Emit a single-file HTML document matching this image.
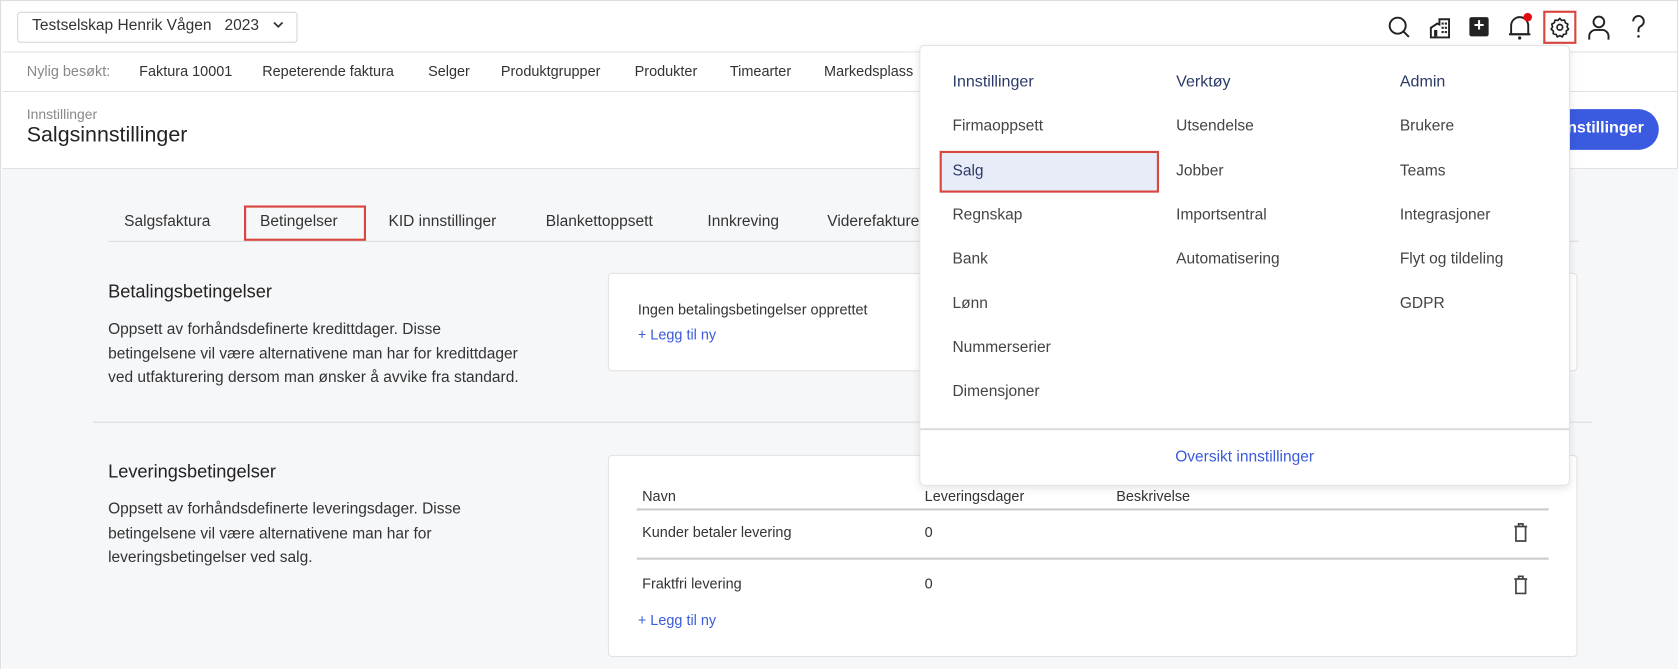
<!DOCTYPE html>
<html><head><meta charset="utf-8"><style>
*{box-sizing:border-box;margin:0;padding:0}
html,body{width:1678px;height:669px;overflow:hidden;background:#fff}
#s{position:absolute;left:0;top:0;width:1568px;height:625px;transform:scale(1.0702);transform-origin:0 0;font-family:"Liberation Sans",sans-serif;color:#333;font-size:14px}
.a{position:absolute;white-space:nowrap}
.bl{color:#3b5bdb}
.dd .i{position:absolute;font-size:14.5px;color:#444}
.dd .h{position:absolute;font-size:15px;color:#2b3a67}
</style></head><body><div id="s">
<div class="a" style="left:0;top:0;width:1568px;height:625px;border:1px solid #ddd;border-bottom:none"></div>
<div class="a" style="left:16px;top:11px;width:262px;height:29px;border:1px solid #d6d6d6;border-radius:3px"></div>
<div class="a" style="left:30px;top:16px;font-size:14.5px;color:#333">Testselskap Henrik Vågen&nbsp;&nbsp; 2023</div>
<svg class="a" style="left:254px;top:18px" width="12" height="10"><path d="M2 3l4 4 4-4" stroke="#333" stroke-width="1.6" fill="none"/></svg>
<div class="a" style="left:2px;top:48px;width:1566px;height:1px;background:#e2e2e2"></div>
<svg class="a" style="left:1296px;top:14px" width="24" height="24"><circle cx="10" cy="10" r="7.5" stroke="#222" stroke-width="1.8" fill="none"/><path d="M15.5 15.5l5 5" stroke="#222" stroke-width="1.8"/></svg>
<svg class="a" style="left:1335px;top:15px" width="22" height="22"><path d="M2 20V11l6-4 2 1V3h9v17z" stroke="#222" stroke-width="1.8" fill="none"/><path d="M5 13h3v6H5zM12 6h2v2h-2zM15 6h2v2h-2zM12 10h2v2h-2zM15 10h2v2h-2zM12 14h2v2h-2zM15 14h2v2h-2z" fill="#222"/></svg>
<div class="a" style="left:1373px;top:16px;width:18px;height:18px;background:#222;border-radius:2px"></div>
<div class="a" style="left:1373px;top:14px;width:18px;text-align:center;color:#fff;font-weight:bold;font-size:17px">+</div>
<svg class="a" style="left:1408px;top:11px" width="24" height="28"><path d="M4 21V13a8 8 0 0 1 16 0v8z" stroke="#222" stroke-width="1.8" fill="none"/><path d="M2 21h20" stroke="#222" stroke-width="1.8"/><circle cx="12" cy="24.5" r="1.5" fill="#222"/><circle cx="19.5" cy="5" r="4" fill="#e30613"/></svg>
<div class="a" style="left:1442px;top:10px;width:31px;height:31px;border:2px solid #d9453f"></div>
<svg class="a" style="left:1447px;top:15px" width="21" height="21" viewBox="0 0 24 24"><path d="M12 2.5l2 2.2 3-.4.9 2.9 2.7 1.4-.9 2.9 1.6 2.5-2.4 1.9.1 3-3 .7-1.4 2.7-2.6-1.4-2.6 1.4-1.4-2.7-3-.7.1-3-2.4-1.9 1.6-2.5-.9-2.9 2.7-1.4.9-2.9 3 .4z" stroke="#222" stroke-width="1.8" fill="none" stroke-linejoin="round"/><circle cx="12" cy="12" r="3" stroke="#222" stroke-width="1.8" fill="none"/></svg>
<svg class="a" style="left:1483px;top:13px" width="22" height="26"><circle cx="11" cy="7.5" r="5" stroke="#222" stroke-width="1.8" fill="none"/><path d="M2 24v-3a6 6 0 0 1 6-6h6a6 6 0 0 1 6 6v3" stroke="#222" stroke-width="1.8" fill="none"/></svg>
<svg class="a" style="left:1523px;top:13px" width="16" height="24"><path d="M3 7a5 5 0 1 1 7 4.5c-1.5.8-2 1.8-2 3.5v2" stroke="#222" stroke-width="1.8" fill="none"/><circle cx="8" cy="21" r="1.2" fill="#222"/></svg>
<div class="a" style="left:2px;top:85px;width:1566px;height:1px;background:#e2e2e2"></div>
<div class="a" style="top:59px;left:25px;color:#888;font-size:13.5px">Nylig besøkt:</div>
<div class="a" style="top:59px;left:130px;font-size:13.5px">Faktura 10001</div>
<div class="a" style="top:59px;left:245px;font-size:13.5px">Repeterende faktura</div>
<div class="a" style="top:59px;left:400px;font-size:13.5px">Selger</div>
<div class="a" style="top:59px;left:468px;font-size:13.5px">Produktgrupper</div>
<div class="a" style="top:59px;left:593px;font-size:13.5px">Produkter</div>
<div class="a" style="top:59px;left:682px;font-size:13.5px">Timearter</div>
<div class="a" style="top:59px;left:770px;font-size:13.5px">Markedsplass</div>
<div class="a" style="top:99px;left:25px;color:#888;font-size:13px">Innstillinger</div>
<div class="a" style="top:115px;left:25px;font-size:20px;color:#222">Salgsinnstillinger</div>
<div class="a" style="left:1350px;top:102px;width:200px;height:38px;border-radius:19px;background:#3a5be0"></div>
<div class="a" style="left:1400px;top:111px;width:136px;text-align:right;color:#fff;font-weight:bold;font-size:15px">Innstillinger</div>
<div class="a" style="left:2px;top:157px;width:1566px;height:468px;background:#f6f7f9;border-top:1px solid #e2e2e2"></div>
<div class="a" style="left:101px;top:225px;width:1374px;height:1px;background:#ddd"></div>
<div class="a" style="top:199px;left:116px;font-size:14.5px">Salgsfaktura</div>
<div class="a" style="left:228px;top:192px;width:114px;height:33px;border:2px solid #d9453f"></div>
<div class="a" style="top:199px;left:243px;font-size:14.5px">Betingelser</div>
<div class="a" style="top:199px;left:363px;font-size:14.5px">KID innstillinger</div>
<div class="a" style="top:199px;left:510px;font-size:14.5px">Blankettoppsett</div>
<div class="a" style="top:199px;left:661px;font-size:14.5px">Innkreving</div>
<div class="a" style="top:199px;left:773px;font-size:14.5px">Viderefakturering</div>
<div class="a" style="top:263px;left:101px;font-size:17px;color:#222">Betalingsbetingelser</div>
<div class="a" style="top:297px;left:101px;font-size:14.5px;line-height:22.5px">Oppsett av forhåndsdefinerte kredittdager. Disse<br>betingelsene vil være alternativene man har for kredittdager<br>ved utfakturering dersom man ønsker å avvike fra standard.</div>
<div class="a" style="left:568px;top:255px;width:906px;height:92px;background:#fff;border:1px solid #e2e2e2;border-radius:4px"></div>
<div class="a" style="top:282px;left:596px;font-size:13.5px">Ingen betalingsbetingelser opprettet</div>
<div class="a bl" style="top:305px;left:596px;font-size:13.5px">+ Legg til ny</div>
<div class="a" style="left:87px;top:394px;width:1401px;height:1px;background:#ddd"></div>
<div class="a" style="top:431px;left:101px;font-size:17px;color:#222">Leveringsbetingelser</div>
<div class="a" style="top:465px;left:101px;font-size:14.5px;line-height:22.5px">Oppsett av forhåndsdefinerte leveringsdager. Disse<br>betingelsene vil være alternativene man har for<br>leveringsbetingelser ved salg.</div>
<div class="a" style="left:568px;top:425px;width:906px;height:189px;background:#fff;border:1px solid #e2e2e2;border-radius:4px"></div>
<div class="a" style="top:456px;left:600px;font-size:13.5px">Navn</div>
<div class="a" style="top:456px;left:864px;font-size:13.5px">Leveringsdager</div>
<div class="a" style="top:456px;left:1043px;font-size:13.5px">Beskrivelse</div>
<div class="a" style="left:595px;top:475px;width:852px;height:1.5px;background:#ccc"></div>
<div class="a" style="top:490px;left:600px;font-size:13.5px">Kunder betaler levering</div>
<div class="a" style="top:490px;left:864px;font-size:13.5px">0</div>
<div class="a" style="left:595px;top:521px;width:852px;height:1.5px;background:#ccc"></div>
<div class="a" style="top:538px;left:600px;font-size:13.5px">Fraktfri levering</div>
<div class="a" style="top:538px;left:864px;font-size:13.5px">0</div>
<svg class="a" style="left:1414px;top:488px" width="14" height="19"><path d="M1 4h12M5 4V1.5h4V4M2.5 4v13.5h9V4" stroke="#444" stroke-width="1.6" fill="none"/></svg>
<svg class="a" style="left:1414px;top:537px" width="14" height="19"><path d="M1 4h12M5 4V1.5h4V4M2.5 4v13.5h9V4" stroke="#444" stroke-width="1.6" fill="none"/></svg>
<div class="a bl" style="top:572px;left:596px;font-size:13.5px">+ Legg til ny</div>
<div class="a dd" style="left:859px;top:42px;width:608px;height:412px;background:#fff;border:1px solid #e4e4e4;border-radius:5px;box-shadow:0 2px 8px rgba(0,0,0,.1)">
<div class="h" style="left:30px;top:25px">Innstillinger</div>
<div class="h" style="left:239px;top:25px">Verktøy</div>
<div class="h" style="left:448px;top:25px">Admin</div>
<div style="position:absolute;left:18px;top:98px;width:205px;height:39px;background:#e8ecf8;border:2px solid #d9453f"></div>
<div class="i" style="left:30px;top:67px">Firmaoppsett</div>
<div class="i" style="left:30px;top:109px;color:#2b3a67">Salg</div>
<div class="i" style="left:30px;top:150px">Regnskap</div>
<div class="i" style="left:30px;top:191px">Bank</div>
<div class="i" style="left:30px;top:233px">Lønn</div>
<div class="i" style="left:30px;top:274px">Nummerserier</div>
<div class="i" style="left:30px;top:315px">Dimensjoner</div>
<div class="i" style="left:239px;top:67px">Utsendelse</div>
<div class="i" style="left:239px;top:109px">Jobber</div>
<div class="i" style="left:239px;top:150px">Importsentral</div>
<div class="i" style="left:239px;top:191px">Automatisering</div>
<div class="i" style="left:448px;top:67px">Brukere</div>
<div class="i" style="left:448px;top:109px">Teams</div>
<div class="i" style="left:448px;top:150px">Integrasjoner</div>
<div class="i" style="left:448px;top:191px">Flyt og tildeling</div>
<div class="i" style="left:448px;top:233px">GDPR</div>
<div style="position:absolute;left:0;top:357px;width:606px;height:1.5px;background:#ddd"></div>
<div style="position:absolute;left:0;top:376px;width:606px;text-align:center;font-size:14.5px;color:#3b5bdb">Oversikt innstillinger</div>
</div>
</div></body></html>
